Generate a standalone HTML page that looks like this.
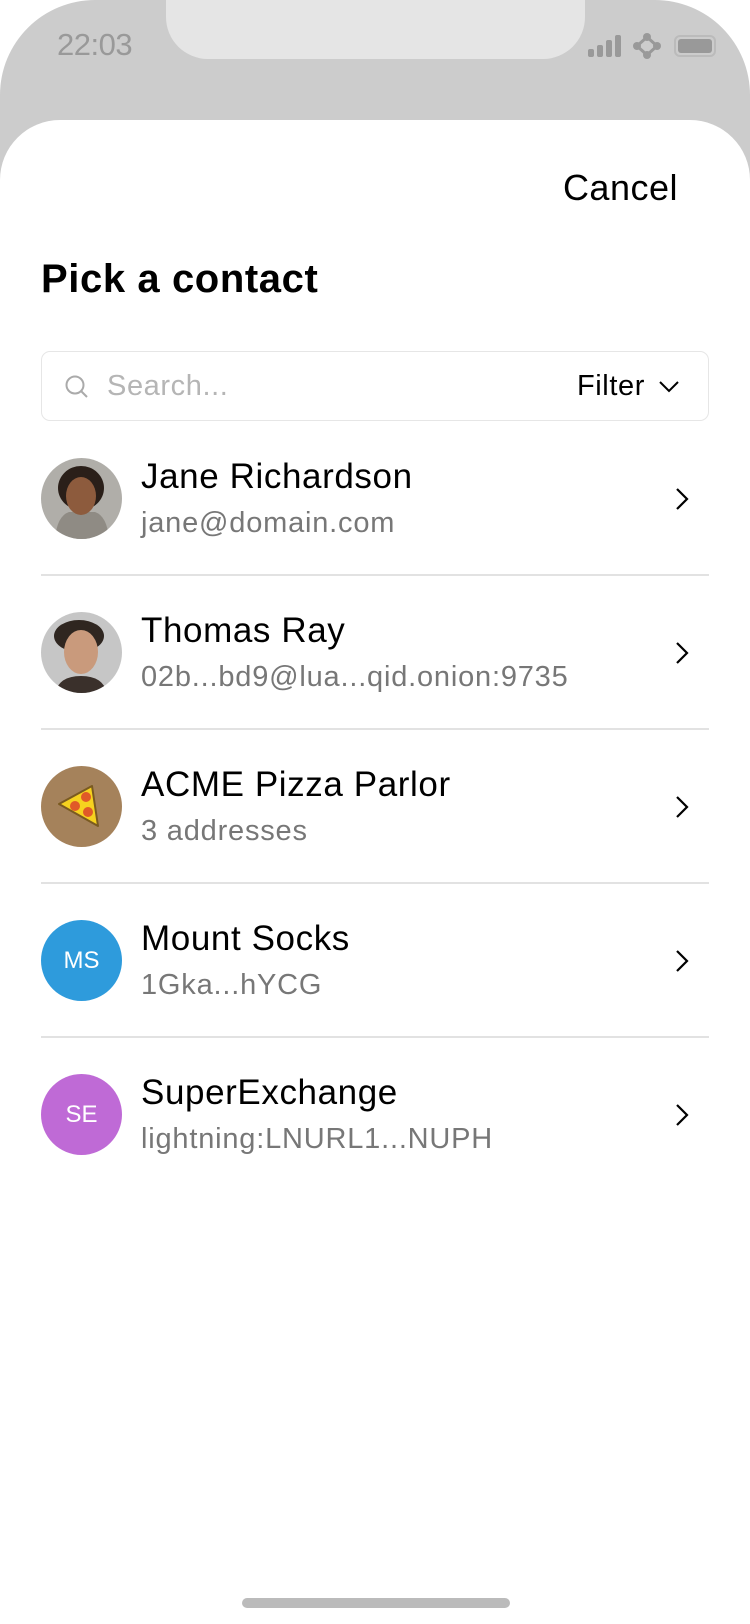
<!DOCTYPE html>
<html><head><meta charset="utf-8"><style>
*{margin:0;padding:0;box-sizing:border-box}
body{width:750px;height:1624px;background:#fff;font-family:"Liberation Sans",sans-serif;position:relative;overflow:hidden}
.phone{position:absolute;left:0;top:0;width:750px;height:1624px;background:#cccccc;border-radius:95px 95px 0 0}
.notch{position:absolute;left:166px;top:0;width:419px;height:59px;background:#e5e5e5;border-radius:0 0 42px 42px}
.time{position:absolute;left:57px;top:27px;font-size:31px;color:#999;letter-spacing:-0.5px}
.sheet{position:absolute;left:0;top:120px;width:750px;height:1504px;background:#fff;border-radius:60px 60px 0 0}
.cancel{position:absolute;right:72px;top:167px;font-size:36px;color:#000;letter-spacing:0.5px}
.title{position:absolute;left:41px;top:257px;font-size:40px;font-weight:bold;color:#000;letter-spacing:0.6px}
.search{position:absolute;left:41px;top:351px;width:668px;height:70px;border:1.5px solid #e6e6e6;border-radius:9px}
.search .ph{position:absolute;left:65px;top:18px;font-size:29px;color:#b5b5b5;letter-spacing:0.6px}
.search .flt{position:absolute;right:63px;top:18px;font-size:29px;color:#000;letter-spacing:0.6px}
.row{position:absolute;left:41px;width:668px;height:154px}
.av{position:absolute;left:0;top:0;width:81px;height:81px;border-radius:50%;overflow:hidden;color:#fff;font-size:24px;text-align:center;line-height:81px}
.nm{position:absolute;left:100px;top:-1px;font-size:35px;color:#000;white-space:nowrap;letter-spacing:0.6px}
.sb{position:absolute;left:100px;top:49px;font-size:29px;color:#777;white-space:nowrap;letter-spacing:0.8px}
.chev{position:absolute;right:20px;top:28px}
.div{position:absolute;left:41px;width:668px;height:2px;background:#e2e2e2}
.home{position:absolute;left:242px;top:1598px;width:268px;height:10px;border-radius:5px;background:#bbb}
</style></head><body>
<div class="phone"></div>
<div class="notch"></div>
<div class="time">22:03</div>
<svg style="position:absolute;left:586px;top:33px" width="130" height="26" viewBox="0 0 130 26">
<g fill="#999"><rect x="2" y="16" width="6" height="8" rx="2"/><rect x="11" y="12" width="6" height="12" rx="2"/><rect x="20" y="7" width="6" height="17" rx="2"/><rect x="29" y="2" width="6" height="22" rx="2"/></g>
<g fill="none" stroke="#999" stroke-width="3"><path d="M61 4 L71 13 L61 22 L51 13Z"/></g>
<g fill="#999"><circle cx="61" cy="4" r="4"/><circle cx="71" cy="13" r="4"/><circle cx="61" cy="22" r="4"/><circle cx="51" cy="13" r="4"/></g>
<rect x="89" y="3" width="40" height="20" rx="5" fill="none" stroke="#bbb" stroke-width="2"/>
<rect x="92" y="6" width="34" height="14" rx="3" fill="#999"/>
</svg>
<div class="sheet"></div>
<div class="cancel">Cancel</div>
<div class="title">Pick a contact</div>
<div class="search">
<svg style="position:absolute;left:22px;top:22px" width="26" height="26" viewBox="0 0 26 26"><circle cx="11" cy="11" r="8.5" fill="none" stroke="#aaa" stroke-width="2"/><path d="M17 17 L23 23" stroke="#aaa" stroke-width="2"/></svg>
<div class="ph">Search...</div>
<div class="flt">Filter</div>
<svg style="position:absolute;right:28px;top:28px" width="22" height="14" viewBox="0 0 22 14"><path d="M2 2 L11 11 L20 2" fill="none" stroke="#000" stroke-width="2"/></svg>
</div>

<div class="row" style="top:458px"><div class="av" style="background:#b0aea9"><svg width="81" height="81" viewBox="0 0 81 81"><path d="M14 81 Q16 58 28 54 L54 54 Q66 58 68 81Z" fill="#8f8b84"/><ellipse cx="40" cy="30" rx="23" ry="22" fill="#2a1f19"/><ellipse cx="40" cy="38" rx="15" ry="19" fill="#8d5b3d"/></svg></div><div class="nm">Jane Richardson</div><div class="sb">jane@domain.com</div><svg class="chev" width="14" height="26" viewBox="0 0 14 26"><path d="M2 3 L12 13 L2 23" fill="none" stroke="#000" stroke-width="2.2"/></svg></div>
<div class="div" style="top:574px"></div>
<div class="row" style="top:612px"><div class="av" style="background:#c6c6c6"><svg width="81" height="81" viewBox="0 0 81 81"><path d="M14 81 Q18 64 40 64 Q62 64 66 81Z" fill="#3a302b"/><ellipse cx="38" cy="24" rx="25" ry="16" fill="#2f2620"/><ellipse cx="40" cy="40" rx="17" ry="22" fill="#c99a7c"/></svg></div><div class="nm">Thomas Ray</div><div class="sb">02b...bd9@lua...qid.onion:9735</div><svg class="chev" width="14" height="26" viewBox="0 0 14 26"><path d="M2 3 L12 13 L2 23" fill="none" stroke="#000" stroke-width="2.2"/></svg></div>
<div class="div" style="top:728px"></div>
<div class="row" style="top:766px"><div class="av" style="background:#a5825b"><svg width="81" height="81" viewBox="0 0 81 81"><path d="M18 38 L51 20 L57 60 Z" fill="#f6d21f" stroke="#7a5a20" stroke-width="2" stroke-linejoin="round"/><circle cx="45" cy="31" r="5" fill="#e05a28"/><circle cx="34" cy="40" r="5" fill="#e05a28"/><circle cx="47" cy="46" r="5" fill="#e05a28"/></svg></div><div class="nm">ACME Pizza Parlor</div><div class="sb">3 addresses</div><svg class="chev" width="14" height="26" viewBox="0 0 14 26"><path d="M2 3 L12 13 L2 23" fill="none" stroke="#000" stroke-width="2.2"/></svg></div>
<div class="div" style="top:882px"></div>
<div class="row" style="top:920px"><div class="av" style="background:#2e9bdc">MS</div><div class="nm">Mount Socks</div><div class="sb">1Gka...hYCG</div><svg class="chev" width="14" height="26" viewBox="0 0 14 26"><path d="M2 3 L12 13 L2 23" fill="none" stroke="#000" stroke-width="2.2"/></svg></div>
<div class="div" style="top:1036px"></div>
<div class="row" style="top:1074px"><div class="av" style="background:#bf6ad6">SE</div><div class="nm">SuperExchange</div><div class="sb">lightning:LNURL1...NUPH</div><svg class="chev" width="14" height="26" viewBox="0 0 14 26"><path d="M2 3 L12 13 L2 23" fill="none" stroke="#000" stroke-width="2.2"/></svg></div>
<div class="home"></div>
</body></html>
